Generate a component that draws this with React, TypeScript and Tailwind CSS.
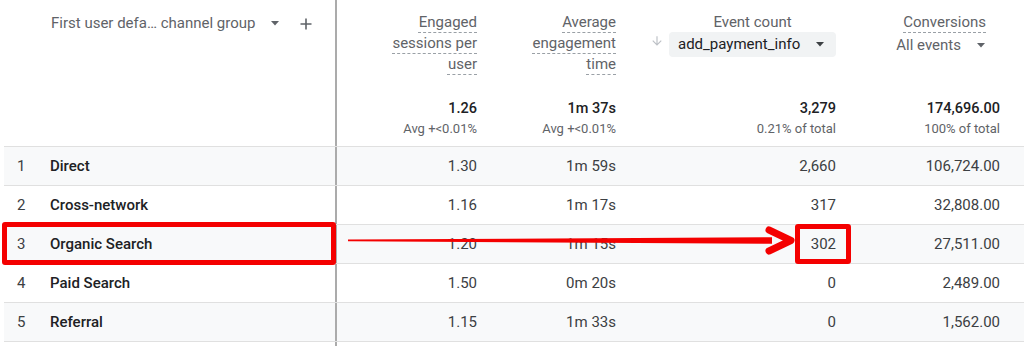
import React from "react";

const rows = [
    { idx: 1, name: "Direct", eng: "1.30", time: "1m 59s", events: "2,660", conv: "106,724.00" },
    { idx: 2, name: "Cross-network", eng: "1.16", time: "1m 17s", events: "317", conv: "32,808.00" },
    { idx: 3, name: "Organic Search", eng: "1.20", time: "1m 15s", events: "302", conv: "27,511.00" },
    { idx: 4, name: "Paid Search", eng: "1.50", time: "0m 20s", events: "0", conv: "2,489.00" },
    { idx: 5, name: "Referral", eng: "1.15", time: "1m 33s", events: "0", conv: "1,562.00" },
];

const grid = "grid grid-cols-[333px_156px_139px_220px_172px]";
const dashed = "underline decoration-dashed decoration-[#9aa0a6] decoration-1 underline-offset-[5px]";

function Caret({ className }: { className?: string }) {
    return (
        <svg width="10" height="5" viewBox="0 0 10 5" className={className}>
            <path d="M1 0h8L5 4.5z" fill="currentColor" />
        </svg>
    );
}

function HeaderLines({ lines }: { lines: string[] }) {
    return (
        <div className="flex flex-col items-end">
            {lines.map((l) => (
                <span key={l} className={`leading-[21px] ${dashed}`}>
                    {l}
                </span>
            ))}
        </div>
    );
}

function Totals({ value, sub }: { value: string; sub: string }) {
    return (
        <div className="flex flex-col items-end">
            <span className="text-[14.5px] leading-[20px] font-medium text-[#202124]">{value}</span>
            <span className="text-[13px] leading-[16px] mt-[2px] text-[#5f6368]">{sub}</span>
        </div>
    );
}

export default function App() {
    return (
        <div className="relative w-[1024px] h-[346px] bg-white overflow-hidden font-['Roboto',sans-serif] text-[15px]">
            <div className="ml-1">
                {/* header */}
                <div className={`${grid} h-[147px] border-b border-[#e0e0e0] text-[#5f6368]`}>
                    <div className="border-r-2 border-[#ababab] pt-[13px] pl-[47px] flex items-start">
                        <div className="flex items-center h-[21px]">
                            <span className="leading-[21px]">First user defa… channel group</span>
                            <Caret className="ml-[15px] text-[#5f6368]" />
                            <svg width="12" height="12" viewBox="0 0 12 12" className="ml-[20px]">
                                <path d="M6 0.5v11M0.5 6h11" stroke="#5f6368" strokeWidth="1.6" />
                            </svg>
                        </div>
                    </div>
                    <div className="flex flex-col justify-between items-end pr-4 pt-[12px] pb-[9px]">
                        <HeaderLines lines={["Engaged", "sessions per", "user"]} />
                        <Totals value="1.26" sub="Avg +<0.01%" />
                    </div>
                    <div className="flex flex-col justify-between items-end pr-4 pt-[12px] pb-[9px]">
                        <HeaderLines lines={["Average", "engagement", "time"]} />
                        <Totals value="1m 37s" sub="Avg +<0.01%" />
                    </div>
                    <div className="flex flex-col justify-between items-end pr-4 pt-[12px] pb-[9px]">
                        <div className="flex items-start">
                            <svg width="14" height="14" viewBox="0 0 24 24" className="mt-[22px] mr-[5px]">
                                <path d="M20 12l-1.41-1.41L13 16.17V4h-2v12.17l-5.58-5.59L4 12l8 8 8-8z" fill="#bdc1c6" />
                            </svg>
                            <div className="flex flex-col items-center">
                                <span className={`leading-[21px] ${dashed}`}>Event count</span>
                                <div className="mt-[-1px] h-[25px] w-[167px] rounded-[4px] bg-[#f1f3f4] flex items-center pl-[9px] text-[#202124]">
                                    <span>add_payment_info</span>
                                    <Caret className="ml-[15px] text-[#3c4043]" />
                                </div>
                            </div>
                        </div>
                        <Totals value="3,279" sub="0.21% of total" />
                    </div>
                    <div className="flex flex-col justify-between items-end pr-6 pt-[12px] pb-[9px]">
                        <div className="flex flex-col items-end mr-[14px]">
                            <span className={`leading-[21px] ${dashed}`}>Conversions</span>
                            <div className="flex items-center h-[25px]">
                                <span>All events</span>
                                <Caret className="ml-[15px] text-[#5f6368]" />
                            </div>
                        </div>
                        <Totals value="174,696.00" sub="100% of total" />
                    </div>
                </div>

                {/* body rows */}
                {rows.map((r, i) => (
                    <div
                        key={r.idx}
                        className={`${grid} h-[39px] border-b border-[#e0e0e0] ${i % 2 === 0 ? "bg-[#f8f9fa]" : "bg-white"} text-[#3c4043]`}
                    >
                        <div className="border-r-2 border-[#ababab] flex items-center pl-[13px]">
                            <span className="w-[33px]">{r.idx}</span>
                            <span className="font-medium text-[#202124]">{r.name}</span>
                        </div>
                        <div className="flex items-center justify-end pr-4">{r.eng}</div>
                        <div className="flex items-center justify-end pr-4">{r.time}</div>
                        <div className="flex items-center justify-end pr-4">{r.events}</div>
                        <div className="flex items-center justify-end pr-6">{r.conv}</div>
                    </div>
                ))}
                <div className={`${grid} h-[10px]`}>
                    <div className="border-r-2 border-[#ababab]" />
                </div>
            </div>

            {/* annotations */}
            <div className="absolute left-[2px] top-[222px] w-[334px] h-[43px] border-[5px] border-[#f40000] rounded-[3px]" />
            <div className="absolute left-[795px] top-[224px] w-[56px] h-[40px] border-[5px] border-[#f40000] rounded-[3px]" />
            <svg className="absolute left-[340px] top-[225px]" width="460" height="35" viewBox="0 0 460 35">
                <polygon points="8,14.6 432,12.3 432,18.7 8,16.2" fill="#f40000" />
                <polyline
                    points="429,5 451,15.5 429,26"
                    fill="none"
                    stroke="#f40000"
                    strokeWidth="7"
                    strokeLinecap="round"
                    strokeLinejoin="round"
                />
            </svg>
        </div>
    );
}
